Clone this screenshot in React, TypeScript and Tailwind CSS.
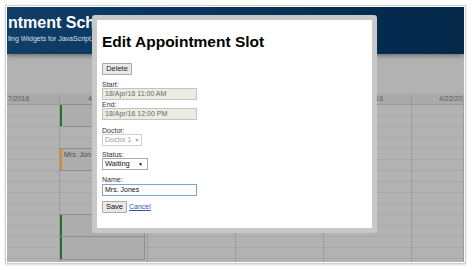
const rows = Array.from({ length: 15 }, (_, i) => i);

type Ev = { top: number; h: number; color: string; text?: string };

const events: Ev[] = [
  { top: 0, h: 22, color: "bg-[#23722a]" },
  { top: 44, h: 22, color: "bg-[#d9892b]", text: "Mrs. Jones" },
  { top: 110, h: 22, color: "bg-[#23722a]" },
  { top: 132, h: 23, color: "bg-[#23722a]" },
];

const Column = ({ w, label, align, evs }: { w: string; label: string; align: string; evs?: Ev[] }) => (
  <div className={`${w} shrink-0 border-r border-[#9c9c9c] flex flex-col`}>
    <div className={`h-[11px] bg-[#aaaaaa] border-b border-[#9a9a9a] flex items-center overflow-hidden whitespace-nowrap text-[7px] leading-[10px] text-[#5a5a5a] ${align}`}>
      {label}
    </div>
    <div className="relative">
      {rows.map((r) => (
        <div key={r} className="h-[11px] border-b border-[#a7a7a7]" />
      ))}
      {evs?.map((e, i) => (
        <div
          key={i}
          className="absolute left-0 w-[85px] flex border border-l-0 border-[#8e8e8e] bg-[#adadad]"
          style={{ top: e.top - 1, height: e.h + 1 }}
        >
          <div className={`w-[2px] h-full ${e.color}`} />
          {e.text && (
            <div className="w-[29px] overflow-hidden pl-[2px] pt-[2px] text-[7px] leading-[8px] text-[#4a4a4a] whitespace-nowrap">
              {e.text}
            </div>
          )}
        </div>
      ))}
    </div>
  </div>
);

const Label = ({ children }: { children: string }) => (
  <div className="h-[8px] flex items-center text-[7px] leading-[7px] text-[#333]">{children}</div>
);

const Field = ({ children, cls }: { children: string; cls: string }) => (
  <div className={`w-[95px] h-[12px] border pl-[2px] flex items-center text-[7px] leading-[8px] ${cls}`}>{children}</div>
);

export default function App() {
  return (
    <div className="w-[474px] h-[270px] bg-white pt-[5px] pl-[5px]" style={{ fontFamily: '"Liberation Sans", Arial, sans-serif' }}>
      <div className="w-[461px] h-[259px] border border-[#cfcfcf] bg-white p-[1px] shadow-[0_1px_2px_rgba(0,0,0,0.15)]">
        <div className="relative w-[457px] h-[255px] overflow-hidden bg-[#b2b2b2] flex flex-col">
          {/* header */}
          <div className="h-[47px] shrink-0 bg-gradient-to-r from-[#0f3e68] to-[#03284a] pt-[7px] pl-[1px] shadow-[0_2px_4px_rgba(0,0,0,0.35)]">
            <div className="w-[84px] overflow-hidden">
              <div className="text-[16px] leading-[17px] font-bold text-white whitespace-nowrap">ntment Scheduler</div>
              <div className="mt-[4px] text-[7px] leading-[8px] text-[#d6e0ea] whitespace-nowrap">ling Widgets for JavaScript, HTML5</div>
            </div>
          </div>

          {/* calendar */}
          <div className="mt-[40px] flex">
            <Column w="w-[53px]" label="7/2016" align="justify-start pl-[1px]" />
            <Column w="w-[88px]" label="4/18/2016" align="justify-center" evs={events} />
            <Column w="w-[88px]" label="4/19/2016" align="justify-center" />
            <Column w="w-[88px]" label="4/20/2016" align="justify-center" />
            <Column w="w-[88px]" label="4/21/2016" align="justify-center" />
            <Column w="w-[52px]" label="4/22/2016" align="justify-start pl-[27px]" />
          </div>

          {/* modal */}
          <div className="absolute left-[85px] top-[8px] w-[285px] h-[218px] rounded-[3px] border-[5px] border-[#c8c8c8] bg-white">
            <div className="pl-[5px] pt-[13px] text-[#222]">
              <div className="text-[15.5px] leading-[18px] font-bold text-black whitespace-nowrap">Edit Appointment Slot</div>
              <div className="mt-[12px] w-[30px] h-[12px] border border-[#a8a8a8] bg-[#e9e9e9] rounded-[1px] flex items-center justify-center text-[7.5px] leading-[8px] text-[#222]">
                Delete
              </div>
              <div className="mt-[5px]">
                <Label>Start:</Label>
                <Field cls="border-[#c4c4c4] bg-[#ebebe4] text-[#6a6a6a]">18/Apr/16 11:00 AM</Field>
                <Label>End:</Label>
                <Field cls="border-[#c4c4c4] bg-[#ebebe4] text-[#6a6a6a]">18/Apr/16 12:00 PM</Field>
              </div>
              <div className="mt-[6px]">
                <Label>Doctor:</Label>
                <div className="w-[40px] h-[12px] border border-[#d0d0d0] bg-white pl-[2px] flex items-center gap-[3px] text-[7px] leading-[8px] text-[#9a9a9a]">
                  Doctor 1 <span className="text-[5px]">▼</span>
                </div>
              </div>
              <div className="mt-[4px]">
                <Label>Status:</Label>
                <div className="w-[46px] h-[12px] border border-[#a8a8a8] bg-white pl-[2px] pr-[4px] flex items-center justify-between text-[7.5px] leading-[8px] text-[#111]">
                  Waiting <span className="text-[5px]">▼</span>
                </div>
              </div>
              <div className="mt-[4px]">
                <div className="h-[10px] flex items-center text-[7px] leading-[7px] text-[#333]">Name:</div>
                <Field cls="border-[#7da2d6] bg-white text-[#111]">Mrs. Jones</Field>
              </div>
              <div className="mt-[5px] flex items-center gap-[2px]">
                <div className="w-[25px] h-[12px] border border-[#a8a8a8] bg-[#e9e9e9] rounded-[1px] flex items-center justify-center text-[7.5px] leading-[8px] text-[#111]">
                  Save
                </div>
                <span className="text-[7px] leading-[8px] text-[#3457b0] underline">Cancel</span>
              </div>
            </div>
          </div>
        </div>
      </div>
    </div>
  );
}
